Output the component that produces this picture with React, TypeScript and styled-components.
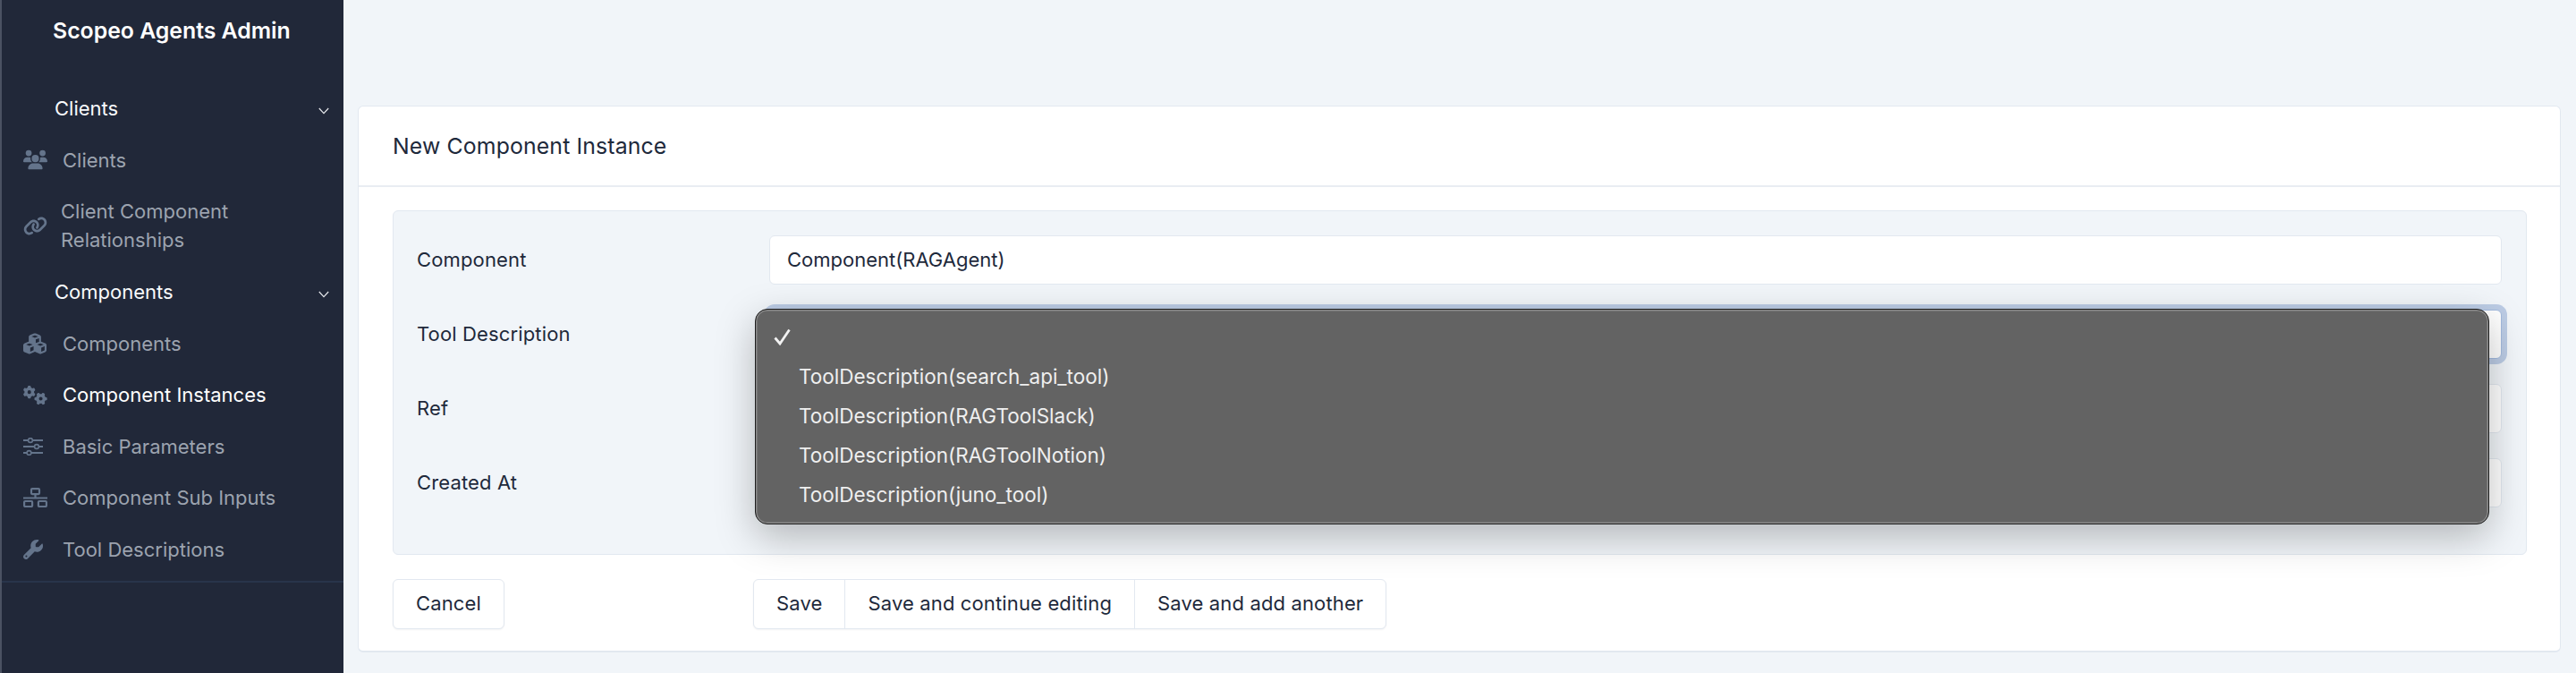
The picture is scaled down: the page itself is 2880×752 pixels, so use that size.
import React from "react";
import styled, { createGlobalStyle } from "styled-components";
import { FaGears, FaCubes, FaLink, FaUsers, FaWrench } from "react-icons/fa6";

const GlobalStyle = createGlobalStyle`
	html, body {
		margin: 0;
		padding: 0;
		overflow: hidden;
		background: #f1f5f9;
	}
	* {
		box-sizing: border-box;
	}
	body {
		font-family: Inter, "Liberation Sans", sans-serif;
		color: #1e293b;
	}
`;

const SlidersIcon = () => (
	<svg width="22" height="20" viewBox="0 0 22 20" fill="none" stroke="currentColor" strokeWidth="2">
		<path d="M0 3h5.5M10.5 3H22M0 10h12.5M17.5 10H22M0 17h4M9 17h13" />
		<circle cx="8" cy="3" r="2.4" strokeWidth="1.6" />
		<circle cx="15" cy="10" r="2.4" strokeWidth="1.6" />
		<circle cx="6.5" cy="17" r="2.4" strokeWidth="1.6" />
	</svg>
);

const SitemapIcon = () => (
	<svg width="27" height="22" viewBox="0 0 27 22" fill="none" stroke="currentColor" strokeWidth="2.2">
		<rect x="9" y="1.1" width="9" height="6" rx="1" />
		<rect x="1.1" y="15" width="9" height="6" rx="1" />
		<rect x="16.9" y="15" width="9" height="6" rx="1" />
		<path d="M13.5 7v4M0 11.5h27" />
	</svg>
);

const Chevron = () => (
	<svg width="12" height="8" viewBox="0 0 12 8" fill="none" stroke="#e5e7eb" strokeWidth="1.2">
		<path d="M.8 1l5.2 5.6L11.2 1" />
	</svg>
);

const CheckIcon = () => (
	<svg width="20" height="19" viewBox="0 0 20 19" fill="none" stroke="#f2f2f2" strokeWidth="2.8">
		<path d="M1.5 10.5l5.5 6.5L17.5 1.5" />
	</svg>
);

type NavEntry = {
	label: string;
	icon: React.ReactNode;
	active?: boolean;
	wrapped?: boolean;
};

const clientLinks: NavEntry[] = [
	{ label: "Clients", icon: <FaUsers size={27} /> },
	{ label: "Client Component Relationships", icon: <FaLink size={27} />, wrapped: true },
];

const componentLinks: NavEntry[] = [
	{ label: "Components", icon: <FaCubes size={26} /> },
	{ label: "Component Instances", icon: <FaGears size={27} />, active: true },
	{ label: "Basic Parameters", icon: <SlidersIcon /> },
	{ label: "Component Sub Inputs", icon: <SitemapIcon /> },
	{ label: "Tool Descriptions", icon: <FaWrench size={22} /> },
];

const toolOptions = [
	"ToolDescription(search_api_tool)",
	"ToolDescription(RAGToolSlack)",
	"ToolDescription(RAGToolNotion)",
	"ToolDescription(juno_tool)",
];

function NavList({ links }: { links: NavEntry[] }) {
	return (
		<>
			{links.map((link) => (
				<NavItem key={link.label}>
					<NavIcon>{link.icon}</NavIcon>
					<NavLabel $active={link.active} $wrapped={link.wrapped}>
						{link.label}
					</NavLabel>
				</NavItem>
			))}
		</>
	);
}

function App() {
	return (
		<Page>
			<GlobalStyle />
			<Sidebar>
				<Brand>Scopeo Agents Admin</Brand>
				<NavGroup>
					Clients
					<Chevron />
				</NavGroup>
				<NavList links={clientLinks} />
				<NavGroup>
					Components
					<Chevron />
				</NavGroup>
				<NavList links={componentLinks} />
				<SidebarRule />
			</Sidebar>
			<Main>
				<Card>
					<CardHeader>New Component Instance</CardHeader>
					<CardBody>
						<Fieldset>
							<Row>
								<Label>Component</Label>
								<Control>Component(RAGAgent)</Control>
							</Row>
							<Row>
								<Label>Tool Description</Label>
								<Control $focused>
									<Menu>
										<MenuCheck>
											<CheckIcon />
										</MenuCheck>
										{toolOptions.map((option) => (
											<MenuOption key={option}>{option}</MenuOption>
										))}
									</Menu>
								</Control>
							</Row>
							<Row>
								<Label>Ref</Label>
								<Control />
							</Row>
							<Row>
								<Label>Created At</Label>
								<Control />
							</Row>
						</Fieldset>
						<Actions>
							<Button>Cancel</Button>
							<ButtonGroup>
								<GroupButton>Save</GroupButton>
								<GroupButton>Save and continue editing</GroupButton>
								<GroupButton>Save and add another</GroupButton>
							</ButtonGroup>
						</Actions>
					</CardBody>
				</Card>
			</Main>
		</Page>
	);
}

const Page = styled.div`
	display: flex;
	height: 752px;
	background: #f1f5f9;
`;

const Sidebar = styled.aside`
	width: 384px;
	flex-shrink: 0;
	background: #212839;
	border-left: 2px solid #4b5262;
`;

const Brand = styled.div`
	height: 92px;
	padding: 21px 0 0 57px;
	font-size: 24.8px;
	line-height: 27px;
	font-weight: 600;
	color: #fff;
`;

const NavGroup = styled.div`
	display: flex;
	align-items: center;
	justify-content: space-between;
	height: 58px;
	padding: 0 16px 0 59px;
	font-size: 22px;
	color: #f8fafc;

	svg {
		margin-top: 5px;
	}
`;

const NavItem = styled.div`
	display: flex;
	align-items: center;
	padding: 12.75px 20px 12.75px 24px;
	font-size: 22px;
	line-height: 32px;
`;

const NavIcon = styled.span`
	display: flex;
	width: 44px;
	flex-shrink: 0;
	color: #64748b;
`;

const NavLabel = styled.span<{ $active?: boolean; $wrapped?: boolean }>`
	color: ${(p) => (p.$active ? "#fff" : "#9ca3af")};
	margin-left: ${(p) => (p.$wrapped ? "-2px" : "0")};
	max-width: 240px;
`;

const SidebarRule = styled.div`
	margin-top: 6px;
	border-top: 2px solid #28344a;
`;

const Main = styled.main`
	flex: 1;
	padding: 118px 17px 23px 16px;
`;

const Card = styled.section`
	height: 611px;
	background: #fff;
	border: 1px solid #e2e8f0;
	border-bottom-width: 2px;
	border-radius: 6px;
`;

const CardHeader = styled.h2`
	margin: 0;
	height: 90px;
	display: flex;
	align-items: center;
	padding-left: 38px;
	border-bottom: 2px solid #e9edf2;
	font-size: 24.8px;
	font-weight: 420;
	letter-spacing: 0.14px;
	color: #1e293b;
`;

const CardBody = styled.div`
	padding: 26px 37px 25px 38px;
`;

const Fieldset = styled.div`
	height: 385px;
	padding: 27px 27px 0 26px;
	background: #f1f5f9;
	border: 1px solid #e2e8f0;
	border-radius: 6px;
`;

const Row = styled.div`
	display: flex;
	align-items: center;
	margin-bottom: 28px;
`;

const Label = styled.div`
	width: 394px;
	flex-shrink: 0;
	padding-bottom: 2px;
	font-size: 22px;
	font-weight: 420;
	letter-spacing: 0.14px;
	color: #1e293b;
`;

const Control = styled.div<{ $focused?: boolean }>`
	position: relative;
	flex: 1;
	height: 55px;
	display: flex;
	align-items: center;
	padding: 0 0 2px 19px;
	background: #fff;
	border: 1px solid ${(p) => (p.$focused ? "#a4bbdf" : "#e2e8f0")};
	border-radius: 6px;
	box-shadow: ${(p) => (p.$focused ? "0 0 0 6px #bccce5" : "none")};
	font-size: 22px;
	color: #1e293b;
`;

const Menu = styled.div`
	position: absolute;
	z-index: 2;
	top: -2px;
	left: -17px;
	right: 13px;
	height: 241px;
	padding-top: 9px;
	background: #636363;
	border: 1px solid #1d1d1d;
	border-radius: 14px;
	box-shadow: inset 0 0 0 1.5px #8a8a8a, 0 14px 44px rgba(0, 0, 0, 0.26);
`;

const MenuCheck = styled.div`
	height: 43px;
	display: flex;
	align-items: center;
	padding-left: 20px;
`;

const MenuOption = styled.div`
	height: 44px;
	display: flex;
	align-items: center;
	padding-left: 48px;
	font-size: 22.5px;
	color: #efefef;
`;

const Actions = styled.div`
	display: grid;
	grid-template-columns: 403px auto;
	justify-content: start;
	margin-top: 27px;
`;

const Button = styled.button`
	width: 125px;
	height: 56px;
	padding: 0 0 2px;
	background: #fff;
	border: 1px solid #e2e8f0;
	border-radius: 6px;
	box-shadow: 0 1px 2px rgba(15, 23, 42, 0.05);
	font: 420 22px Inter, sans-serif;
	letter-spacing: 0.14px;
	color: #1e293b;
`;

const ButtonGroup = styled.div`
	display: flex;
	height: 56px;
	background: #fff;
	border: 1px solid #e2e8f0;
	border-radius: 6px;
	box-shadow: 0 1px 2px rgba(15, 23, 42, 0.05);
`;

const GroupButton = styled.button`
	padding: 0 25px 2px;
	background: none;
	border: none;
	border-left: 1px solid #e2e8f0;
	font: 420 22px Inter, sans-serif;
	letter-spacing: 0.14px;
	color: #1e293b;

	&:first-child {
		border-left: none;
	}
`;

export default App;
